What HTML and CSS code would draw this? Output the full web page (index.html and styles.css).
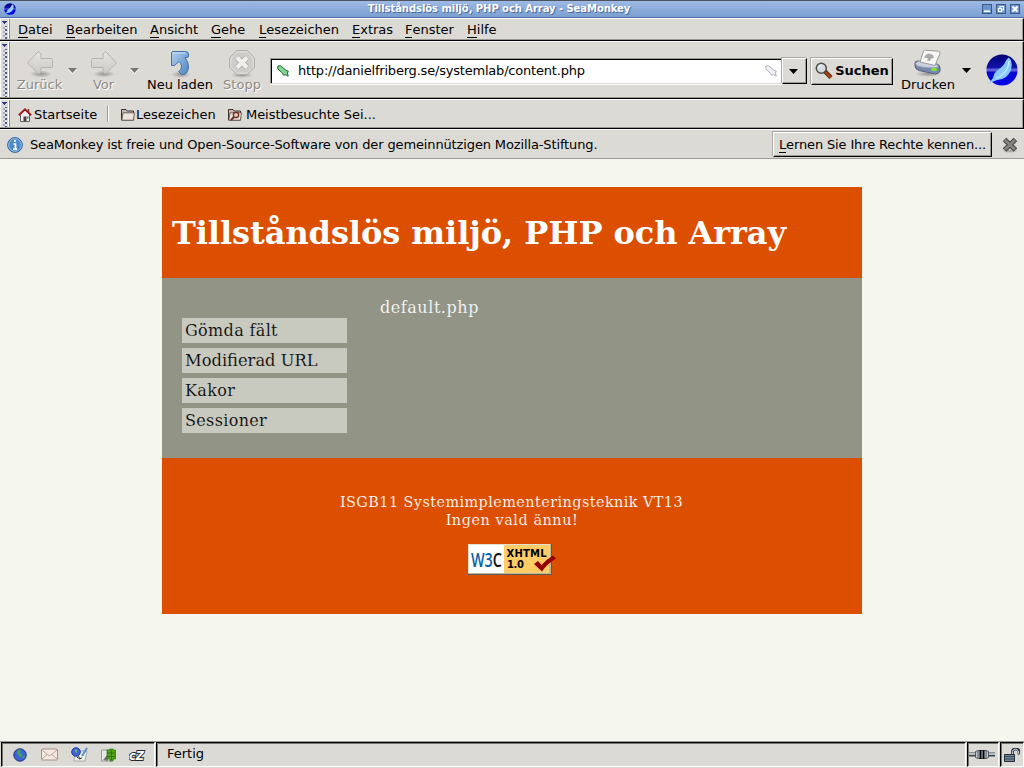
FILE: index.html
```html
<!DOCTYPE html>
<html lang="de">
<head>
<meta charset="utf-8">
<title>Tillståndslös miljö, PHP och Array - SeaMonkey</title>
<link rel="stylesheet" href="styles.css">
</head>
<body>
<svg width="0" height="0" class="defs">
  <defs>
    <linearGradient id="sea" x1="0" y1="0" x2="0" y2="1"><stop offset="0" stop-color="#000078"/><stop offset=".42" stop-color="#1313a8"/><stop offset=".5" stop-color="#7373e8"/><stop offset=".58" stop-color="#0808c8"/><stop offset="1" stop-color="#0505ef"/></linearGradient>
    <linearGradient id="blue" x1="0" y1="0" x2="1" y2="1"><stop offset="0" stop-color="#b3d0ee"/><stop offset="1" stop-color="#4f86bf"/></linearGradient>
    <linearGradient id="grey" x1="0" y1="0" x2="0" y2="1"><stop offset="0" stop-color="#e6e5e2"/><stop offset="1" stop-color="#c9c8c5"/></linearGradient>
    <linearGradient id="w3c"><stop offset=".7" stop-color="#0b5fa8"/><stop offset=".7" stop-color="#111"/></linearGradient>
    <radialGradient id="shade"><stop offset="0" stop-color="#000" stop-opacity=".32"/><stop offset="1" stop-color="#000" stop-opacity="0"/></radialGradient>
    <symbol id="logo" viewBox="0 0 32 32">
      <circle cx="16" cy="16" r="15.6" fill="url(#sea)"/>
      <path d="M.5 30.500Q5 28 7 24Q8 18 13 15Q18 12 20 6.500L22.500 3.500L25 6Q26.500 11 25 16Q22 23 16 25Q10 26 6 28Z" fill="#86c8ff"/>
      <path d="M10 24Q17 22 21 15Q23 11 23 7" fill="none" stroke="#c6e8ff" stroke-width="1.500"/>
    </symbol>
    <symbol id="tag" viewBox="0 0 12 12">
      <path d="M.7 1.2L3.4.6L9.2 5.5L11.3 6.1L10.5 8L11.2 11.2L8.7 9.8L6.2 10.1L5.8 8.5L.8 3.8Z" fill="currentColor" stroke="var(--edge)"/>
    </symbol>
    <symbol id="folder" viewBox="0 0 14 13">
      <path d="M.5 12V1.5H5L6.2 3H12.5V12Z" fill="#c9b9b3" stroke="#3c302d"/>
      <path d="M2 4.8H13.5L12.5 12.2H.8Z" fill="#ece2dc" stroke="#534440" stroke-width=".8"/>
    </symbol>
  </defs>
</svg>

<div class="window">
  <header class="titlebar">
    <svg class="titlebar-logo" width="12" height="12"><use href="#logo"/></svg>
    <span class="titlebar-text">Tillståndslös miljö, PHP och Array - SeaMonkey</span>
    <div class="winbuttons">
      <svg width="10" height="10"><rect x=".5" y=".5" width="9" height="9" fill="#6d95cd" stroke="#39598c"/><path d="M2 7.2H8" stroke="#fff" stroke-width="1.6"/></svg>
      <svg width="10" height="10"><rect x=".5" y=".5" width="9" height="9" fill="#6d95cd" stroke="#39598c"/><path d="M4 4V2.5H7.5V6H6M2.5 4.5H5.5V7.5H2.5Z" fill="none" stroke="#fff" stroke-width="1.2"/></svg>
      <svg width="10" height="10"><rect x=".5" y=".5" width="9" height="9" fill="#6d95cd" stroke="#39598c"/><path d="M2.5 2.5L7.5 7.5M7.5 2.5L2.5 7.5" stroke="#fff" stroke-width="2.2"/></svg>
    </div>
  </header>

  <nav class="bar menubar">
    <div class="grip"></div>
    <span class="menu m1"><u>D</u>atei</span>
    <span class="menu m2"><u>B</u>earbeiten</span>
    <span class="menu m3"><u>A</u>nsicht</span>
    <span class="menu m4"><u>G</u>ehe</span>
    <span class="menu m5"><u>L</u>esezeichen</span>
    <span class="menu m6"><u>E</u>xtras</span>
    <span class="menu m7"><u>F</u>enster</span>
    <span class="menu m8"><u>H</u>ilfe</span>
  </nav>

  <div class="bar toolbar">
    <div class="grip"></div>
    <div class="tool back disabled">
      <svg width="30" height="30" viewBox="0 0 30 30"><ellipse cx="16" cy="25" rx="11" ry="3.5" fill="url(#shade)"/><path d="M2.5 14L13.5 2.5L16 5V9.500H26Q27.500 9.500 27.500 11V17Q27.500 18.500 26 18.500H16V23L13.500 25Z" fill="url(#grey)" stroke="#b4b3b0" stroke-linejoin="round"/></svg>
      <span>Zurück</span>
    </div>
    <svg class="drop" width="9" height="6"><path d="M0 1H9L4.500 6Z" fill="#fff"/><path d="M0 0H9L4.500 5Z" fill="#777672"/></svg>
    <div class="tool fwd disabled">
      <svg width="30" height="30" viewBox="0 0 30 30"><ellipse cx="15" cy="25" rx="11" ry="3.5" fill="url(#shade)"/><path d="M27.500 14L16.500 2.500L14 5V9.500H4Q2.500 9.500 2.500 11V17Q2.500 18.500 4 18.500H14V23L16.500 25Z" fill="url(#grey)" stroke="#b4b3b0" stroke-linejoin="round"/></svg>
      <span>Vor</span>
    </div>
    <svg class="drop" width="9" height="6"><path d="M0 1H9L4.500 6Z" fill="#fff"/><path d="M0 0H9L4.500 5Z" fill="#777672"/></svg>
    <div class="tool reload">
      <svg width="30" height="30" viewBox="0 0 30 30"><ellipse cx="16" cy="25.500" rx="10" ry="3.500" fill="url(#shade)"/><path d="M6.500 3.500Q7 2.500 8 2.500H20Q23.500 2.500 23.500 5V7Q23.500 8.500 22 8.500H20Q23.500 13 23.500 18Q23 24 19 25.500H16.500L13.500 22.500Q17 21 16.500 17Q16 14 14 12.500L9.500 16.500H6.500Z" fill="url(#blue)" stroke="#3f74ac" stroke-linejoin="round"/><path d="M8 4H21" fill="none" stroke="#c8def5"/></svg>
      <span>Neu laden</span>
    </div>
    <div class="tool stop disabled">
      <svg width="30" height="30" viewBox="0 0 30 30"><ellipse cx="15" cy="26" rx="11" ry="3" fill="url(#shade)"/><path d="M9.800 1.500H20.200L27.500 8.800V18.200L20.200 25.500H9.800L2.500 18.200V8.800Z" fill="#cdccc9" stroke="#b0afac"/><path d="M10.300 2.800H19.700L26.200 9.300V17.700L19.700 24.200H10.300L3.800 17.700V9.300Z" fill="none" stroke="#e2e1de"/><path d="M10 8.500L20 18.500M20 8.500L10 18.500" stroke="#aeadaa" stroke-width="5.600"/><path d="M10 8.500L20 18.500M20 8.500L10 18.500" stroke="#f1f0ee" stroke-width="4"/></svg>
      <span>Stopp</span>
    </div>
    <div class="urlbar">
      <svg class="tag-green" width="12" height="12"><use href="#tag"/></svg>
      <span class="url">http://danielfriberg.se/systemlab/content.php</span>
      <svg class="tag-grey" width="12" height="12"><use href="#tag"/></svg>
    </div>
    <div class="button urldrop"><svg width="9" height="5"><path d="M0 0H9L4.500 5Z"/></svg></div>
    <div class="button search">
      <svg width="18" height="18" viewBox="0 0 18 18"><path d="M9.500 9L16 15.500" stroke="#5c2008" stroke-width="4.200"/><path d="M10.500 10L16 15.500" stroke="#ad4716" stroke-width="2.200"/><circle cx="6.300" cy="6.300" r="5" fill="#d4dade" stroke="#4d4d4b" stroke-width="1.500"/><path d="M3.500 6Q4 3.500 6.500 3.500" stroke="#fff" fill="none"/></svg>
      <b>Suchen</b>
    </div>
    <div class="tool print">
      <svg width="30" height="30" viewBox="0 0 30 30"><ellipse cx="15" cy="25" rx="13" ry="3" fill="url(#shade)"/><path d="M2 14Q2 12 5 12L24 15Q27 16 27 19V22Q26 25 22 25L6 21.500Q2 20 2 17Z" fill="#7888ad" stroke="#52617e"/><path d="M2.500 14.500Q4 11.500 8 12L24 15.500Q26 17 25 18.500Q14 20 4 17Z" fill="#cbd2df" stroke="#8792a9" stroke-width=".7"/><path d="M7 13L10.500 2Q11 1 12.500 1.200L25.500 2.200Q27.500 2.800 27 4.500L22 16.500Z" fill="#f6f6f5" stroke="#999"/><path d="M11 9L13 5.500L16 4.500L20 6L21 9L18 9.500L17 12L14 11.500L15 9Z" fill="#a9a9a8"/><ellipse cx="21" cy="20.500" rx="3" ry="1.700" fill="#7ee52c"/></svg>
      <span>Drucken</span>
    </div>
    <svg class="drop printdrop" width="9" height="5"><path d="M0 0H9L4.500 5Z"/></svg>
    <svg class="throbber" width="32" height="32"><use href="#logo"/></svg>
  </div>

  <div class="bar bookmarks">
    <div class="grip"></div>
    <svg class="home" width="14" height="14" viewBox="0 0 14 14"><path d="M2.500 6V13.500H11.500V6L7 2Z" fill="#f0efed" stroke="#62605d"/><path d="M.8 7.300L7 1.300L13.200 7.300" fill="none" stroke="#a51e1e" stroke-width="1.900"/><path d="M10.500 1V4" stroke="#7c3030" stroke-width="1.500"/><path d="M5.500 13V8.500H8.500V13Z" fill="#443d39"/><path d="M9 9.500H10.500" stroke="#4277ad" stroke-width="2"/></svg>
    <span class="bm b1">Startseite</span>
    <i class="sep"></i>
    <svg class="f1" width="14" height="13"><use href="#folder"/></svg>
    <span class="bm b2">Lesezeichen</span>
    <svg class="f2" width="14" height="13" viewBox="0 0 14 13"><use href="#folder" width="14" height="13"/><circle cx="8" cy="7" r="2.700" fill="#e0c5b2" stroke="#64291c" stroke-width="1.200"/><path d="M6 9L3 12" stroke="#64291c" stroke-width="1.800"/></svg>
    <span class="bm b3">Meistbesuchte Sei...</span>
  </div>

  <div class="notice">
    <svg width="16" height="16" viewBox="0 0 16 16"><circle cx="8" cy="8" r="7.400" fill="#4d8ac8" stroke="#2e65a3"/><circle cx="8" cy="8" r="6.300" fill="none" stroke="#9dc1e6"/><path d="M8 3V5M6.500 7H8.500V12M6 12.200H10" fill="none" stroke="#fff" stroke-width="1.700"/></svg>
    <span class="notice-text">SeaMonkey ist freie und Open-Source-Software von der gemeinnützigen Mozilla-Stiftung.</span>
    <div class="button rights"><span><u>L</u>ernen Sie Ihre Rechte kennen...</span></div>
    <svg class="close" width="16" height="16" viewBox="0 0 16 16"><ellipse cx="8" cy="14" rx="8" ry="2" fill="url(#shade)"/><path d="M2.500 2.500L13.500 13M13.500 2.500L2.500 13" stroke="#454543" stroke-width="5"/><path d="M3 3L13 12.500M13 3L3 12.500" stroke="#858582" stroke-width="2.800"/></svg>
  </div>

  <main class="viewport">
    <div class="page">
      <div class="page-head"><h1>Tillståndslös miljö, PHP och Array</h1></div>
      <div class="page-body">
        <ul class="links">
          <li><span>Gömda fält</span></li>
          <li class="ligature"><span>Modifierad URL</span></li>
          <li><span>Kakor</span></li>
          <li><span>Sessioner</span></li>
        </ul>
        <p class="content">default.php</p>
      </div>
      <div class="page-foot">
        <p class="course">ISGB11 Systemimplementeringsteknik VT13</p>
        <p class="none">Ingen vald ännu!</p>
        <svg class="badge" width="88" height="31" viewBox="0 0 88 31">
          <path d="M0 0H84V31H0Z" fill="#5c5c50"/><path d="M0 0H83V30H0Z" fill="#b6b79e"/><path d="M0 0H82L81 29H0Z" fill="#e1e1d2"/>
          <path d="M1 1H36V29H1Z" fill="#fff"/><path d="M36 1H81V29H36Z" fill="#fc6"/>
          <text class="w3" x="3" y="22.500" textLength="31" lengthAdjust="spacingAndGlyphs">W3C</text>
          <text class="xh" x="38.500" y="13" textLength="40">XHTML</text>
          <text class="xh" x="39" y="24" textLength="17">1.0</text>
          <path d="M66 20L70 17L73.500 21Q79 15 85 11.500L88 14.500Q79 20 74 27.500Z" fill="#900"/>
        </svg>
      </div>
    </div>
  </main>

  <footer class="status">
    <div class="pane components">
      <svg width="14" height="14" viewBox="0 0 14 14"><circle cx="7" cy="7" r="6.200" fill="#3d63d8" stroke="#182f83"/><path d="M5 1.500L8 2L7 5L9 6L8 10L6 8L4 5ZM9 9L12 7L11 11Z" fill="#47a35c"/></svg>
      <svg class="mail" width="17" height="13" viewBox="0 0 17 13"><rect x=".5" y="1" width="16" height="11" rx="1" fill="#f4e8e1" stroke="#a98f84"/><path d="M1 2L7 7Q8.500 8 10 7L16 2M1 11L6 6.500M16 11L11 6.500" fill="none" stroke="#bca69b"/></svg>
      <svg width="17" height="15" viewBox="0 0 17 15"><path d="M4 4H16L14 14H3Z" fill="#eeefed" stroke="#aaa"/><circle cx="5" cy="5" r="4.300" fill="#3f65d9" stroke="#203a94"/><path d="M4 2L6 3L6 6L4 5Z" fill="#60b574"/><path d="M16 1L11 9" stroke="#5990c9" stroke-width="2"/><path d="M6 11Q9 8 8 12L11 11" fill="none" stroke="#282828"/></svg>
      <svg width="15" height="14" viewBox="0 0 15 14"><path d="M.5 2H11V13H.5Z" fill="#e8e8e6" stroke="#999"/><path d="M2 12L6 7L7 13Z" fill="#777"/><path d="M6 2H9V1H12V2H14.500V11H12V13H9V11H6Z" fill="#50a51b" stroke="#2b6e0a" stroke-width=".7"/><path d="M6 5H14M6 8.500H14M10.500 2V12" stroke="#276208" stroke-width=".7"/></svg>
      <svg width="18" height="14" viewBox="0 0 18 14"><text class="cz" x="0" y="11.500" textLength="15" lengthAdjust="spacingAndGlyphs">cZ</text></svg>
    </div>
    <div class="pane message"><span>Fertig</span></div>
    <div class="pane net"><svg width="26" height="11" viewBox="0 0 26 11"><path d="M0 5.500H26" stroke="#39444d" stroke-width="4"/><path d="M0 5H26" stroke="#c7cdd2" stroke-width="1.800"/><path d="M6.500 2.500L9 1.500H17L19.500 2.500V8.500L17 9.500H9L6.500 8.500Z" fill="#c3cbd0" stroke="#33414a" stroke-width=".8"/><path d="M9 1.500V9.500M17 1.500V9.500" stroke="#4c5860"/><path d="M11.500 1V10M14.500 1V10" stroke="#050505" stroke-width="2"/></svg></div>
    <div class="pane lock"><svg width="16" height="14" viewBox="0 0 16 14"><path d="M8.500 7V3.500Q8.500 1 11.500 1Q15 1 15 3.500V6.500" fill="none" stroke="#25333e" stroke-width="2.800"/><path d="M8.500 6V3.500Q8.500 1.500 11.500 1.300Q14.800 1.500 14.800 6" fill="none" stroke="#d1dce1"/><path d="M.5 6.500H10.500V13.500H.5Z" fill="#728596" stroke="#23313d"/><path d="M1 8.500H10M1 11H10" stroke="#374b5b"/></svg></div>
  </footer>
</div>
</body>
</html>
```
FILE: styles.css
```css
* { box-sizing: border-box; }
body { margin: 0; font: 13px/16px "DejaVu Sans", sans-serif; color: #000; background: #dcdad5; }
svg { display: block; flex: none; }
.defs { position: absolute; }
p, h1, ul { margin: 0; padding: 0; }
span, b, p, h1 { white-space: nowrap; }
u { text-decoration: none; border-bottom: 1px solid #000; display: inline-block; line-height: 14px; }

.window { width: 1024px; height: 768px; display: flex; flex-direction: column; overflow: hidden; }

.titlebar { height: 18px; flex: none; display: flex; align-items: center; padding: 1px 4px 1px 4px; border-top: 1px solid #4d535c; border-bottom: 1px solid #4a6ea5; background: linear-gradient(#9dbae3, #7b9fd2); }
.titlebar-text { flex: 1; text-align: center; color: #fff; font-size: 10px; font-weight: bold; line-height: 14px; text-shadow: 1px 1px 0 #4d6b99; letter-spacing: -.06px; }
.winbuttons { display: flex; gap: 4px; }

.bar { flex: none; display: flex; border-top: 1px solid #fff; border-right: 1px solid #000; border-bottom: 1px solid #000; box-shadow: inset -1px -1px 0 #9c9a94; }
.grip { flex: none; width: 10px; margin-bottom: 1px; border-right: 1px solid #8f8d88; box-shadow: inset -1px 0 0 #fff, inset 1px 0 0 #fff; background:
  linear-gradient(#2d3a8b, #2d3a8b) 2px 2px / 5px 1px no-repeat,
  linear-gradient(#2d3a8b, #2d3a8b) 3px 3px / 3px 1px no-repeat,
  linear-gradient(#2d3a8b, #2d3a8b) 4px 4px / 1px 1px no-repeat,
  linear-gradient(#dcdad5, #dcdad5) 0 0 / 10px 7px no-repeat,
  linear-gradient(#dcdad5, #dcdad5) 0 0 / 3px 100% no-repeat,
  linear-gradient(#dcdad5, #dcdad5) 7px 0 / 3px 100% no-repeat,
  conic-gradient(#e4e3e4 25%, #50588c 0 50%, #e4e3e4 0 75%, #a9abbd 0) 3px 0 / 4px 4px; }

.menubar { height: 23px; }
.menu { flex: none; line-height: 21px; }
.menu u { line-height: 15px; }
.m1 { width: 48px; margin-left: 8px; }
.m2 { width: 84px; }
.m3 { width: 61px; }
.m4 { width: 48px; }
.m5 { width: 93px; }
.m6 { width: 53px; }
.m7 { width: 62px; }

.toolbar { height: 58px; }
.tool { flex: none; display: flex; flex-direction: column; align-items: center; padding-top: 7px; }
.tool span { line-height: 16px; margin-top: -2px; }
.disabled { color: #8d8b86; text-shadow: 1px 1px 0 #fff; }
.back { width: 57px; margin-left: 1px; }
.drop { margin-top: 26px; }
.fwd { width: 53px; }
.reload { width: 82px; }
.stop { width: 42px; }
.urlbar { flex: none; display: flex; align-items: center; margin: 16px 0 0 7px; width: 512px; height: 26px; background: #fff; border: 1px solid #dcdad5; border-top-color: #9c9a94; border-left-color: #9c9a94; box-shadow: inset 1px 1px 0 #000, 0 1px 0 #fff; padding: 0 4px 0 6px; }
.tag-green { color: #82d68f; --edge: #1c6732; }
.url { flex: 1; margin-left: 9px; letter-spacing: -.2px; }
.tag-grey { color: #f0f1f5; --edge: #adb0bf; }
.button { flex: none; display: flex; align-items: center; justify-content: center; border: 1px solid #000; border-top-color: #fff; border-left-color: #fff; box-shadow: inset -1px -1px 0 #9c9a94, -1px -1px 0 #aaa8a2; }
.urldrop { width: 25px; height: 26px; margin-top: 16px; }
.urldrop svg { margin-right: 2px; }
.search { width: 82px; height: 27px; margin: 16px 0 0 4px; padding-bottom: 1px; gap: 2px; }
.print { width: 62px; margin-left: 4px; }
.printdrop { margin-left: 3px; }
.throbber { margin: 12px 0 0 15px; }

.bookmarks { height: 30px; }
.home { margin: 8px 0 0 8px; }
.bm { flex: none; line-height: 30px; }
.b1 { width: 73px; margin-left: 2px; }
.sep { flex: none; width: 2px; height: 16px; margin-top: 6px; border-left: 1px solid #9c9a94; border-right: 1px solid #fff; }
.f1 { margin: 8px 0 0 12px; }
.b2 { width: 91px; margin-left: 1px; }
.f2 { margin: 8px 0 0 1px; }
.b3 { margin-left: 4px; letter-spacing: -.05px; }

.notice { flex: none; height: 30px; display: flex; align-items: center; border-top: 1px solid #fff; border-bottom: 1px solid #9c9a94; padding: 1px 6px 0 7px; }
.notice-text { flex: 1; margin-left: 7px; letter-spacing: -.13px; }
.rights { width: 219px; height: 25px; letter-spacing: -.14px; }
.close { margin-left: 10px; }

.viewport { flex: 1; min-height: 0; background: #f5f6ee; padding-top: 28px; }
.page { width: 700px; margin: 0 auto; color: #fff; font-family: "DejaVu Serif", serif; }
.page-head { height: 91px; background: #dc4f00; padding: 27px 10px 0; }
.page-head h1 { font-size: 32px; line-height: 38px; font-weight: bold; letter-spacing: -.06px; }
.page-body { height: 180px; background: #929486; display: flex; padding: 20px; font-size: 16px; line-height: 19px; }
.links { width: 165px; margin-top: 20px; list-style: none; display: flex; flex-direction: column; gap: 5px; color: #000; letter-spacing: .34px; -webkit-text-stroke: .18px #c8c9bf; }
.links li { height: 25px; padding: 3px; background: #c8c9bf; }
.links .ligature { font-size: 16.300px; letter-spacing: 0; }
.content { margin-left: 33px; letter-spacing: .55px; -webkit-text-stroke: .18px #929486; }
.page-foot { height: 156px; background: #dc4f00; padding-top: 35px; text-align: center; font-size: 14.400px; line-height: 18px; }
.page-foot p { -webkit-text-stroke: .15px #dc4f00; }
.course { letter-spacing: .44px; margin-left: -1px; }
.none { letter-spacing: .56px; }
.badge { margin: 15px auto 0; }
.w3 { font: 600 20px "Open Sans", sans-serif; fill: url(#w3c); }
.xh { font: bold 10px "DejaVu Sans", sans-serif; fill: #000; }

.status { flex: none; height: 27px; display: flex; gap: 1px; padding-bottom: 1px; border-top: 1px solid #9c9a94; }
.pane { display: flex; align-items: center; border: 1px solid #fff; border-top-color: #000; border-left-color: #000; box-shadow: inset 1px 1px 0 #77756f; }
.components { width: 154px; margin-left: 1px; padding-left: 11px; gap: 13px; }
.mail { margin-left: 1px; }
.message { flex: 1; padding: 0 0 2px 10px; }
.net { width: 32px; padding-left: 1px; }
.lock { width: 24px; padding-left: 3px; }
.cz { font: italic bold 13px "DejaVu Sans", sans-serif; fill: #fff; stroke: #1d2935; stroke-width: 2px; paint-order: stroke; }
```
